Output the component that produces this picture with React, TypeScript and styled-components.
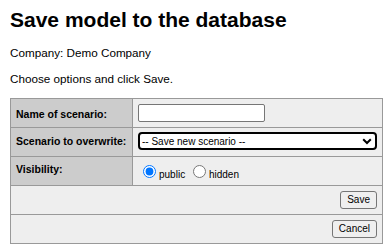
import React, { useState } from 'react';
import styled, { createGlobalStyle } from 'styled-components';

const GlobalStyle = createGlobalStyle`
  body {
    margin: 0;
    padding: 8px 0 0 10px;
    background: #fff;
    font-family: "Liberation Sans", Arial, sans-serif;
    color: #000;
  }
`;

const Title = styled.h1`
  margin: 0 0 14px 0;
  font-size: 21px;
  font-weight: bold;
  line-height: 24px;
`;

const Para = styled.p`
  margin: 0 0 12px 0;
  font-size: 11.7px;
  line-height: 14px;
`;

const FormTable = styled.table`
  width: 373px;
  border-collapse: collapse;
  border: 1px solid #999;
  font-size: 10px;
`;

const LabelCell = styled.th<{ $top: number }>`
  background: #ccc;
  border: 1px solid #999;
  text-align: left;
  font-size: 10.5px;
  font-weight: bold;
  line-height: 12px;
  padding: ${p => p.$top}px 5px 0 5px;
  width: 111px;
  white-space: nowrap;
  vertical-align: top;
`;

const ValueCell = styled.td<{ $pad?: number }>`
  background: #eee;
  border: 1px solid #999;
  padding: ${p => p.$pad ?? 5}px 5px;
  height: ${p => 28 - 2 * (p.$pad ?? 5)}px;
  vertical-align: top;
  line-height: 12px;
`;

const TextInput = styled.input`
  display: block;
  box-sizing: border-box;
  width: 127px;
  height: 18px;
  margin: 0;
  border: 1px solid #767676;
  border-radius: 2px;
  background: #fff;
`;

const SelectWrap = styled.div`
  position: relative;
`;

const Select = styled.select`
  display: block;
  box-sizing: border-box;
  width: 100%;
  height: 18px;
  margin: 0;
  padding: 0 0 0 2px;
  appearance: none;
  font-family: inherit;
  font-size: 10px;
  color: #000;
  background: #fff;
  border: 2px solid #000;
  border-radius: 4px;
  outline: none;
`;

const Chevron = styled.svg`
  position: absolute;
  right: 5px;
  top: 6px;
  pointer-events: none;
`;

const RadioLine = styled.div`
  height: 18px;
  overflow: visible;
  line-height: 12px;
  white-space: nowrap;

  input {
    width: 13px;
    height: 13px;
    margin: 3px 3px 0 5px;
    vertical-align: baseline;
  }
`;

const Button = styled.button`
  display: block;
  margin: 0 0 0 auto;
  box-sizing: border-box;
  height: 18px;
  font-family: inherit;
  font-size: 10px;
  line-height: 12px;
  padding: 2px 6px;
  color: #000;
  border: 1px solid #767676;
  border-radius: 3px;
  background: #efefef;
`;

export default function App() {
  const [visibility, setVisibility] = useState('public');

  return (
    <>
      <GlobalStyle />
      <Title>Save model to the database</Title>
      <Para>Company: Demo Company</Para>
      <Para>Choose options and click Save.</Para>
      <FormTable>
        <tbody>
          <tr>
            <LabelCell $top={9}>Name of scenario:</LabelCell>
            <ValueCell><TextInput type="text" /></ValueCell>
          </tr>
          <tr>
            <LabelCell $top={7}>Scenario to overwrite:</LabelCell>
            <ValueCell $pad={4}>
              <SelectWrap>
                <Select defaultValue="new">
                  <option value="new">-- Save new scenario --</option>
                </Select>
                <Chevron width="10" height="7" viewBox="0 0 10 7">
                  <path d="M1.2 1.2 L5 5 L8.8 1.2" fill="none" stroke="#000" strokeWidth="2" />
                </Chevron>
              </SelectWrap>
            </ValueCell>
          </tr>
          <tr>
            <LabelCell $top={6}>Visibility:</LabelCell>
            <ValueCell>
              <RadioLine>
                <input type="radio" name="vis" checked={visibility === 'public'} onChange={() => setVisibility('public')} />
                public{' '}
                <input type="radio" name="vis" checked={visibility === 'hidden'} onChange={() => setVisibility('hidden')} />
                hidden
              </RadioLine>
            </ValueCell>
          </tr>
          <tr>
            <ValueCell colSpan={2}><Button>Save</Button></ValueCell>
          </tr>
          <tr>
            <ValueCell colSpan={2}><Button>Cancel</Button></ValueCell>
          </tr>
        </tbody>
      </FormTable>
    </>
  );
}
